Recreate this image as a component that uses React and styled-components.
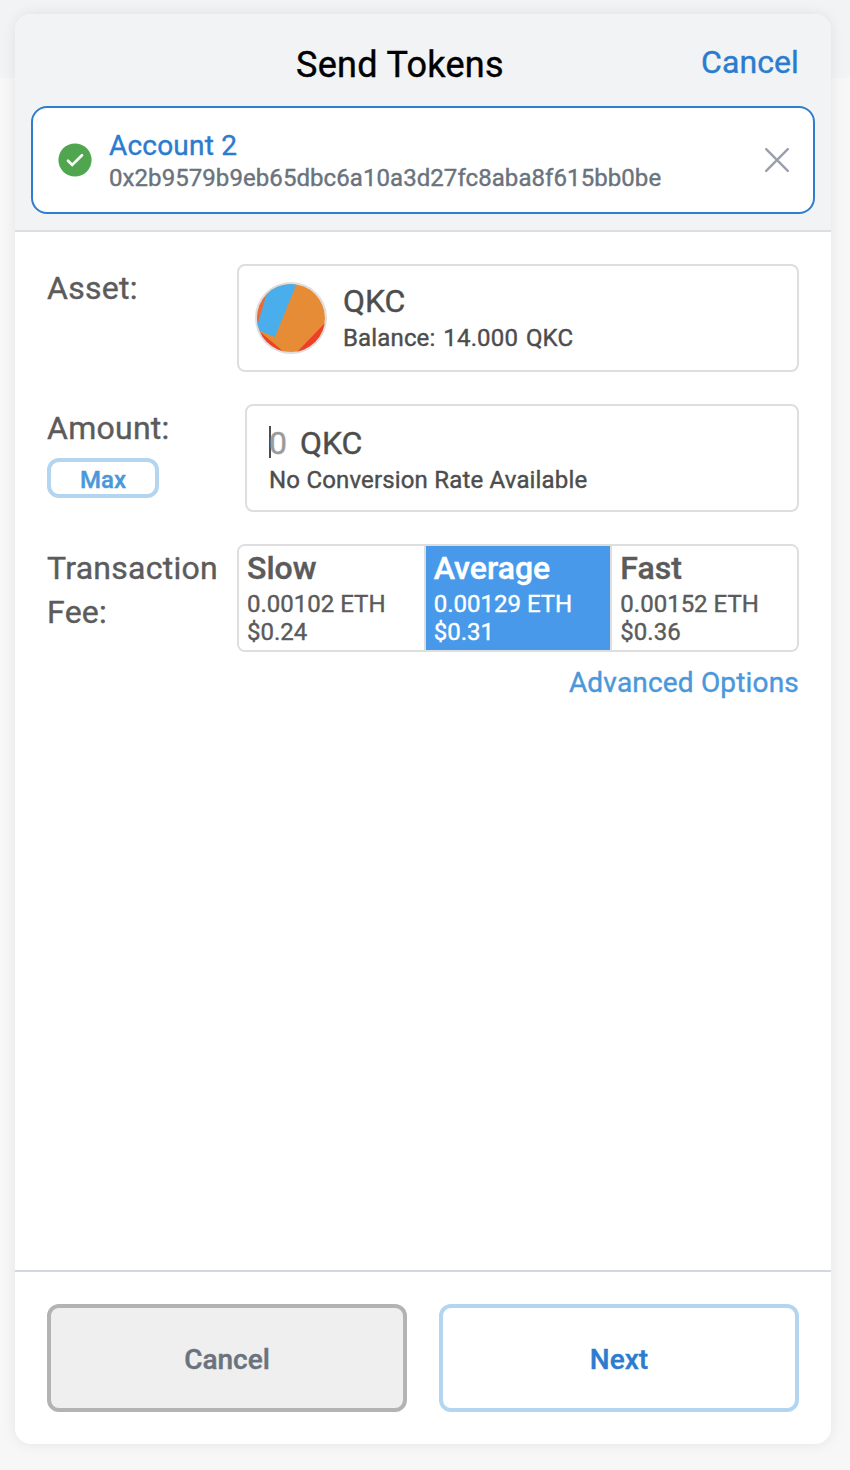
// Send screen of the wallet: recipient, asset, amount and transaction fee.

import { useState } from "react";
import styled, { createGlobalStyle } from "styled-components";

const GlobalStyle = createGlobalStyle`
  * {
    box-sizing: border-box;
  }
  body {
    margin: 0;
    background: #f7f7f7;
    font-family: Roboto, "Liberation Sans", sans-serif;
    -webkit-font-smoothing: antialiased;
    -webkit-text-stroke: 0.4px;
  }
  button,
  input {
    font-family: inherit;
    margin: 0;
  }
`;

// Page with the strip of the app header behind the modal.
const Page = styled.div`
  height: 1470px;
  padding: 14px 19px 26px 15px;
  background: linear-gradient(#f2f3f4 78px, #f7f7f7 78px);
`;

const Modal = styled.div`
  display: flex;
  flex-direction: column;
  height: 1430px;
  border-radius: 16px;
  background: #fff;
  box-shadow: 0 0 14px rgba(0, 0, 0, 0.08);
  overflow: hidden;
`;

const Header = styled.header`
  height: 218px;
  padding: 0 16px;
  background: #f2f3f4;
  border-bottom: 2px solid #dedede;
`;

const TitleRow = styled.div`
  display: flex;
  height: 92px;
  padding: 28px 16px 0 0;
`;

const Title = styled.h1`
  flex: 1;
  margin: 0;
  padding: 1px 0 0 68px;
  font-size: 36px;
  font-weight: 400;
  line-height: 45px;
  letter-spacing: 0.3px;
  text-align: center;
  color: #000;
`;

// Text buttons without a frame.
const LinkButton = styled.button`
  height: ${({ $large }) => ($large ? 40 : 42)}px;
  padding: 0;
  border: none;
  background: none;
  font-size: ${({ $large }) => ($large ? 32 : 28)}px;
  line-height: 40px;
  letter-spacing: ${({ $large }) => ($large ? 0.1 : 0.18)}px;
  color: ${({ $large }) => ($large ? "#2b7cce" : "#4a98da")};
  cursor: pointer;
`;

const Recipient = styled.div`
  display: flex;
  align-items: center;
  height: 108px;
  padding: 0 24px 0 25px;
  border: 2px solid #2f7dcd;
  border-radius: 16px;
  background: #fff;
`;

const RecipientText = styled.div`
  flex: 1;
  padding: 2px 0 0 17px;
`;

const RecipientName = styled.div`
  font-size: 28px;
  line-height: 34px;
  letter-spacing: 0.2px;
  color: #2b7cce;
`;

const RecipientAddress = styled.div`
  font-size: 24px;
  line-height: 30px;
  letter-spacing: 0.07px;
  color: #6a737d;
`;

const ClearButton = styled.button`
  display: flex;
  padding: 0;
  border: none;
  background: none;
  cursor: pointer;
`;

const Form = styled.main`
  flex: 1;
  padding: 32px 32px 0;
`;

const Row = styled.div`
  display: flex;
  justify-content: space-between;
  height: 108px;
  margin-bottom: ${({ $last }) => ($last ? 10 : 32)}px;
`;

const Label = styled.div`
  padding-top: 2px;
  font-size: 32px;
  line-height: 44px;
  letter-spacing: 0.27px;
  color: #5b5b5b;
`;

const MaxButton = styled.button`
  display: block;
  width: 112px;
  height: 40px;
  margin-top: 8px;
  padding: 4px 0 0;
  border: 4px solid #b3d5ef;
  border-radius: 12px;
  background: #fff;
  font-size: 24px;
  font-weight: 500;
  line-height: 28px;
  color: #4a98da;
  cursor: pointer;
`;

const Field = styled.div`
  display: flex;
  align-items: center;
  width: ${({ $width }) => $width}px;
  padding: ${({ $padding }) => $padding};
  border: 2px solid #dedede;
  border-radius: 8px;
  background: #fff;
  color: #4d4d4d;
`;

const AssetIcon = styled.div`
  display: flex;
  width: 72px;
  height: 72px;
  margin-right: 16px;
  border: 2px solid #dedede;
  border-radius: 50%;
  overflow: hidden;
`;

const Symbol = styled.div`
  padding-bottom: 2px;
  font-size: 32px;
  line-height: 38px;
`;

const Detail = styled.div`
  font-size: 24px;
  line-height: 32px;
  letter-spacing: 0.15px;
  word-spacing: ${({ $wide }) => ($wide ? 1.8 : 0.2)}px;
`;

const AmountLine = styled.div`
  display: flex;
  align-items: center;
  gap: 13px;
  height: 40px;
`;

// Amount entry with its text cursor.
const AmountInput = styled.div`
  display: flex;
  align-items: center;
  height: 32px;
  margin-bottom: 4px;
  border-left: 2px solid #4d4d4d;
  font-size: 32px;
  line-height: 34px;
  padding-top: 2px;
  text-indent: -2px;
  color: #9b9b9b;
`;

const FeeGroup = styled.div`
  display: flex;
  width: 562px;
  border: 2px solid #dedede;
  border-radius: 8px;
  overflow: hidden;
`;

const FeeButton = styled.button`
  display: flex;
  flex: 1;
  flex-direction: column;
  padding: 2px 8px 0;
  border: none;
  border-left: ${({ $first }) => ($first ? "none" : "2px solid #dedede")};
  background: ${({ $active }) => ($active ? "#4899ea" : "#fff")};
  color: ${({ $active }) => ($active ? "#fff" : "#5b5b5b")};
  text-align: left;
  cursor: pointer;
`;

const FeeName = styled.div`
  margin-bottom: 2px;
  font-size: 32px;
  font-weight: 500;
  line-height: 40px;
`;

const FeeValue = styled.div`
  font-size: 24px;
  line-height: 28px;
`;

const AdvancedRow = styled.div`
  display: flex;
  justify-content: flex-end;
`;

const Footer = styled.footer`
  display: grid;
  grid-template-columns: 1fr 1fr;
  gap: 32px;
  height: 174px;
  padding: 32px;
  border-top: 2px solid #d2d8dd;
`;

const FooterButton = styled.button`
  padding: 2px 0 0;
  border: 4px solid ${({ $primary }) => ($primary ? "#b3d5ef" : "#b3b3b3")};
  border-radius: 12px;
  background: ${({ $primary }) => ($primary ? "#fff" : "#efefef")};
  color: ${({ $primary }) => ($primary ? "#2b7cce" : "#6a737d")};
  font-size: 28px;
  font-weight: 500;
  cursor: pointer;
`;

const CheckIcon = () => (
  <svg width="34" height="34" viewBox="0 0 34 34" fill="none">
    <circle cx="17" cy="17" r="16.6" fill="#4fa64f" />
    <path
      d="M10 17.7 L14.2 21.9 L24 12.2"
      stroke="#fff"
      strokeWidth="2.7"
      strokeLinecap="round"
    />
  </svg>
);

const CloseIcon = () => (
  <svg width="24" height="24" viewBox="0 0 24 24">
    <path
      d="M1.2 1.2 L22.8 22.8 M22.8 1.2 L1.2 22.8"
      stroke="#9b9fae"
      strokeWidth="2.4"
      strokeLinecap="round"
    />
  </svg>
);

// Coloured shapes that identify the token.
const TokenIdenticon = () => (
  <svg width="68" height="68" viewBox="0 0 68 68">
    <rect width="68" height="68" fill="#e68c36" />
    <path d="M0 0 H12 L9 14 L1 42 H0 Z" fill="#ec6a36" />
    <path d="M2 47 L27 68 H0 Z M68 39 L40 68 H68 Z" fill="#ec4126" />
    <path d="M9 12 L16 -6 H43 L39.5 0 L18 53 L0 46 V42 Z" fill="#4aaeec" />
  </svg>
);

const fees = [
  { name: "Slow", eth: "0.00102 ETH", fiat: "$0.24" },
  { name: "Average", eth: "0.00129 ETH", fiat: "$0.31" },
  { name: "Fast", eth: "0.00152 ETH", fiat: "$0.36" },
];

const App = () => {
  const [selectedFee, setSelectedFee] = useState("Average");

  return (
    <>
      <GlobalStyle />
      <Page>
        <Modal>
          <Header>
            <TitleRow>
              <Title>Send Tokens</Title>
              <LinkButton $large>Cancel</LinkButton>
            </TitleRow>
            <Recipient>
              <CheckIcon />
              <RecipientText>
                <RecipientName>Account 2</RecipientName>
                <RecipientAddress>
                  0x2b9579b9eb65dbc6a10a3d27fc8aba8f615bb0be
                </RecipientAddress>
              </RecipientText>
              <ClearButton aria-label="Clear">
                <CloseIcon />
              </ClearButton>
            </Recipient>
          </Header>

          <Form>
            {/* Asset */}
            <Row>
              <Label>Asset:</Label>
              <Field $width={562} $padding="0 16px">
                <AssetIcon>
                  <TokenIdenticon />
                </AssetIcon>
                <div>
                  <Symbol>QKC</Symbol>
                  <Detail $wide>Balance: 14.000 QKC</Detail>
                </div>
              </Field>
            </Row>

            {/* Amount */}
            <Row>
              <div>
                <Label>Amount:</Label>
                <MaxButton>Max</MaxButton>
              </div>
              <Field $width={554} $padding="4px 22px 0">
                <div>
                  <AmountLine>
                    <AmountInput>0</AmountInput>
                    <Symbol>QKC</Symbol>
                  </AmountLine>
                  <Detail>No Conversion Rate Available</Detail>
                </div>
              </Field>
            </Row>

            {/* Transaction fee */}
            <Row $last>
              <Label>
                Transaction
                <br />
                Fee:
              </Label>
              <FeeGroup>
                {fees.map((fee, i) => (
                  <FeeButton
                    key={fee.name}
                    $first={i === 0}
                    $active={fee.name === selectedFee}
                    onClick={() => setSelectedFee(fee.name)}
                  >
                    <FeeName>{fee.name}</FeeName>
                    <FeeValue>{fee.eth}</FeeValue>
                    <FeeValue>{fee.fiat}</FeeValue>
                  </FeeButton>
                ))}
              </FeeGroup>
            </Row>
            <AdvancedRow>
              <LinkButton>Advanced Options</LinkButton>
            </AdvancedRow>
          </Form>

          <Footer>
            <FooterButton>Cancel</FooterButton>
            <FooterButton $primary>Next</FooterButton>
          </Footer>
        </Modal>
      </Page>
    </>
  );
};

export default App;
